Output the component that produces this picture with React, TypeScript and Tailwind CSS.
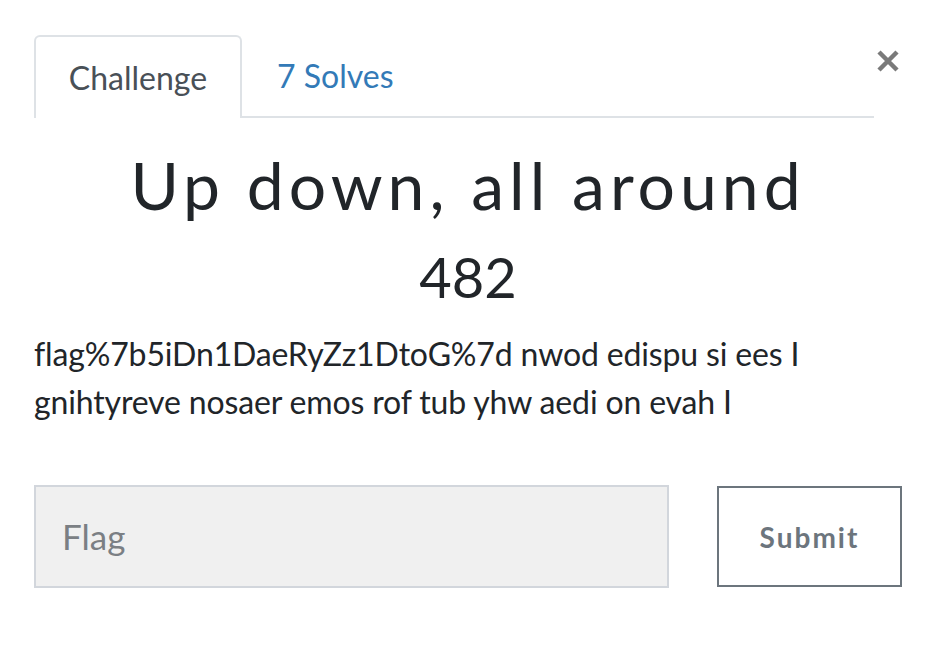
import React from 'react';

// Challenge modal: tabs, title, value, description, flag form.
export default function App() {
  return (
    <div className="w-[936px] h-[662px] bg-white relative" style={{ fontFamily: 'Lato, "Liberation Sans", sans-serif' }}>
      <button className="absolute left-[875px] top-[48px] leading-none" aria-label="Close">
        <svg width="26" height="26" viewBox="0 0 26 26">
          <path d="M4 4 L22 22 M22 4 L4 22" stroke="#7a7a7a" strokeWidth="4.5" strokeLinecap="butt" />
        </svg>
      </button>

      <div className="pt-[35px] pl-[34px] w-[874px]">
        <div className="flex border-b-2 border-[#dee2e6]">
          <div className="w-[208px] h-[83px] -mb-[2px] border-2 border-b-0 border-[#dee2e6] rounded-t-[6px] bg-white flex items-center justify-center text-[32px] text-[#495057]">
            Challenge
          </div>
          <div className="px-[35px] h-[81px] flex items-center text-[32px] text-[#337ab7]">7 Solves</div>
        </div>
      </div>

      <div className="px-[34px]">
        <h2 className="text-center text-[66px] leading-none mt-[34px] text-[#212529] tracking-[5px]" style={{ fontWeight: 400 }}>
          Up down, all around
        </h2>
        <h3 className="text-center text-[56px] leading-none mt-[31px] text-[#212529]">482</h3>
        <p className="mt-[25px] text-[32px] leading-[48px] text-[#212529] tracking-[-0.15px]">
          flag%7b5iDn1DaeRyZz1DtoG%7d nwod edispu si ees I
          <br />
          gnihtyreve nosaer emos rof tub yhw aedi on evah I
        </p>

        <div className="flex items-start mt-[59px] gap-[48px]">
          <div className="w-[635px] h-[103px] bg-[#f0f0f0] border-2 border-[#d2d6dc] flex items-center pl-[26px] text-[35px] text-[#7b7f84]">
            Flag
          </div>
          <button className="w-[185px] h-[101px] mt-[1px] border-2 border-[#6c757d] bg-white text-[#6c757d] text-[28px] font-bold tracking-[2px] flex items-center justify-center">
            Submit
          </button>
        </div>
      </div>
    </div>
  );
}
